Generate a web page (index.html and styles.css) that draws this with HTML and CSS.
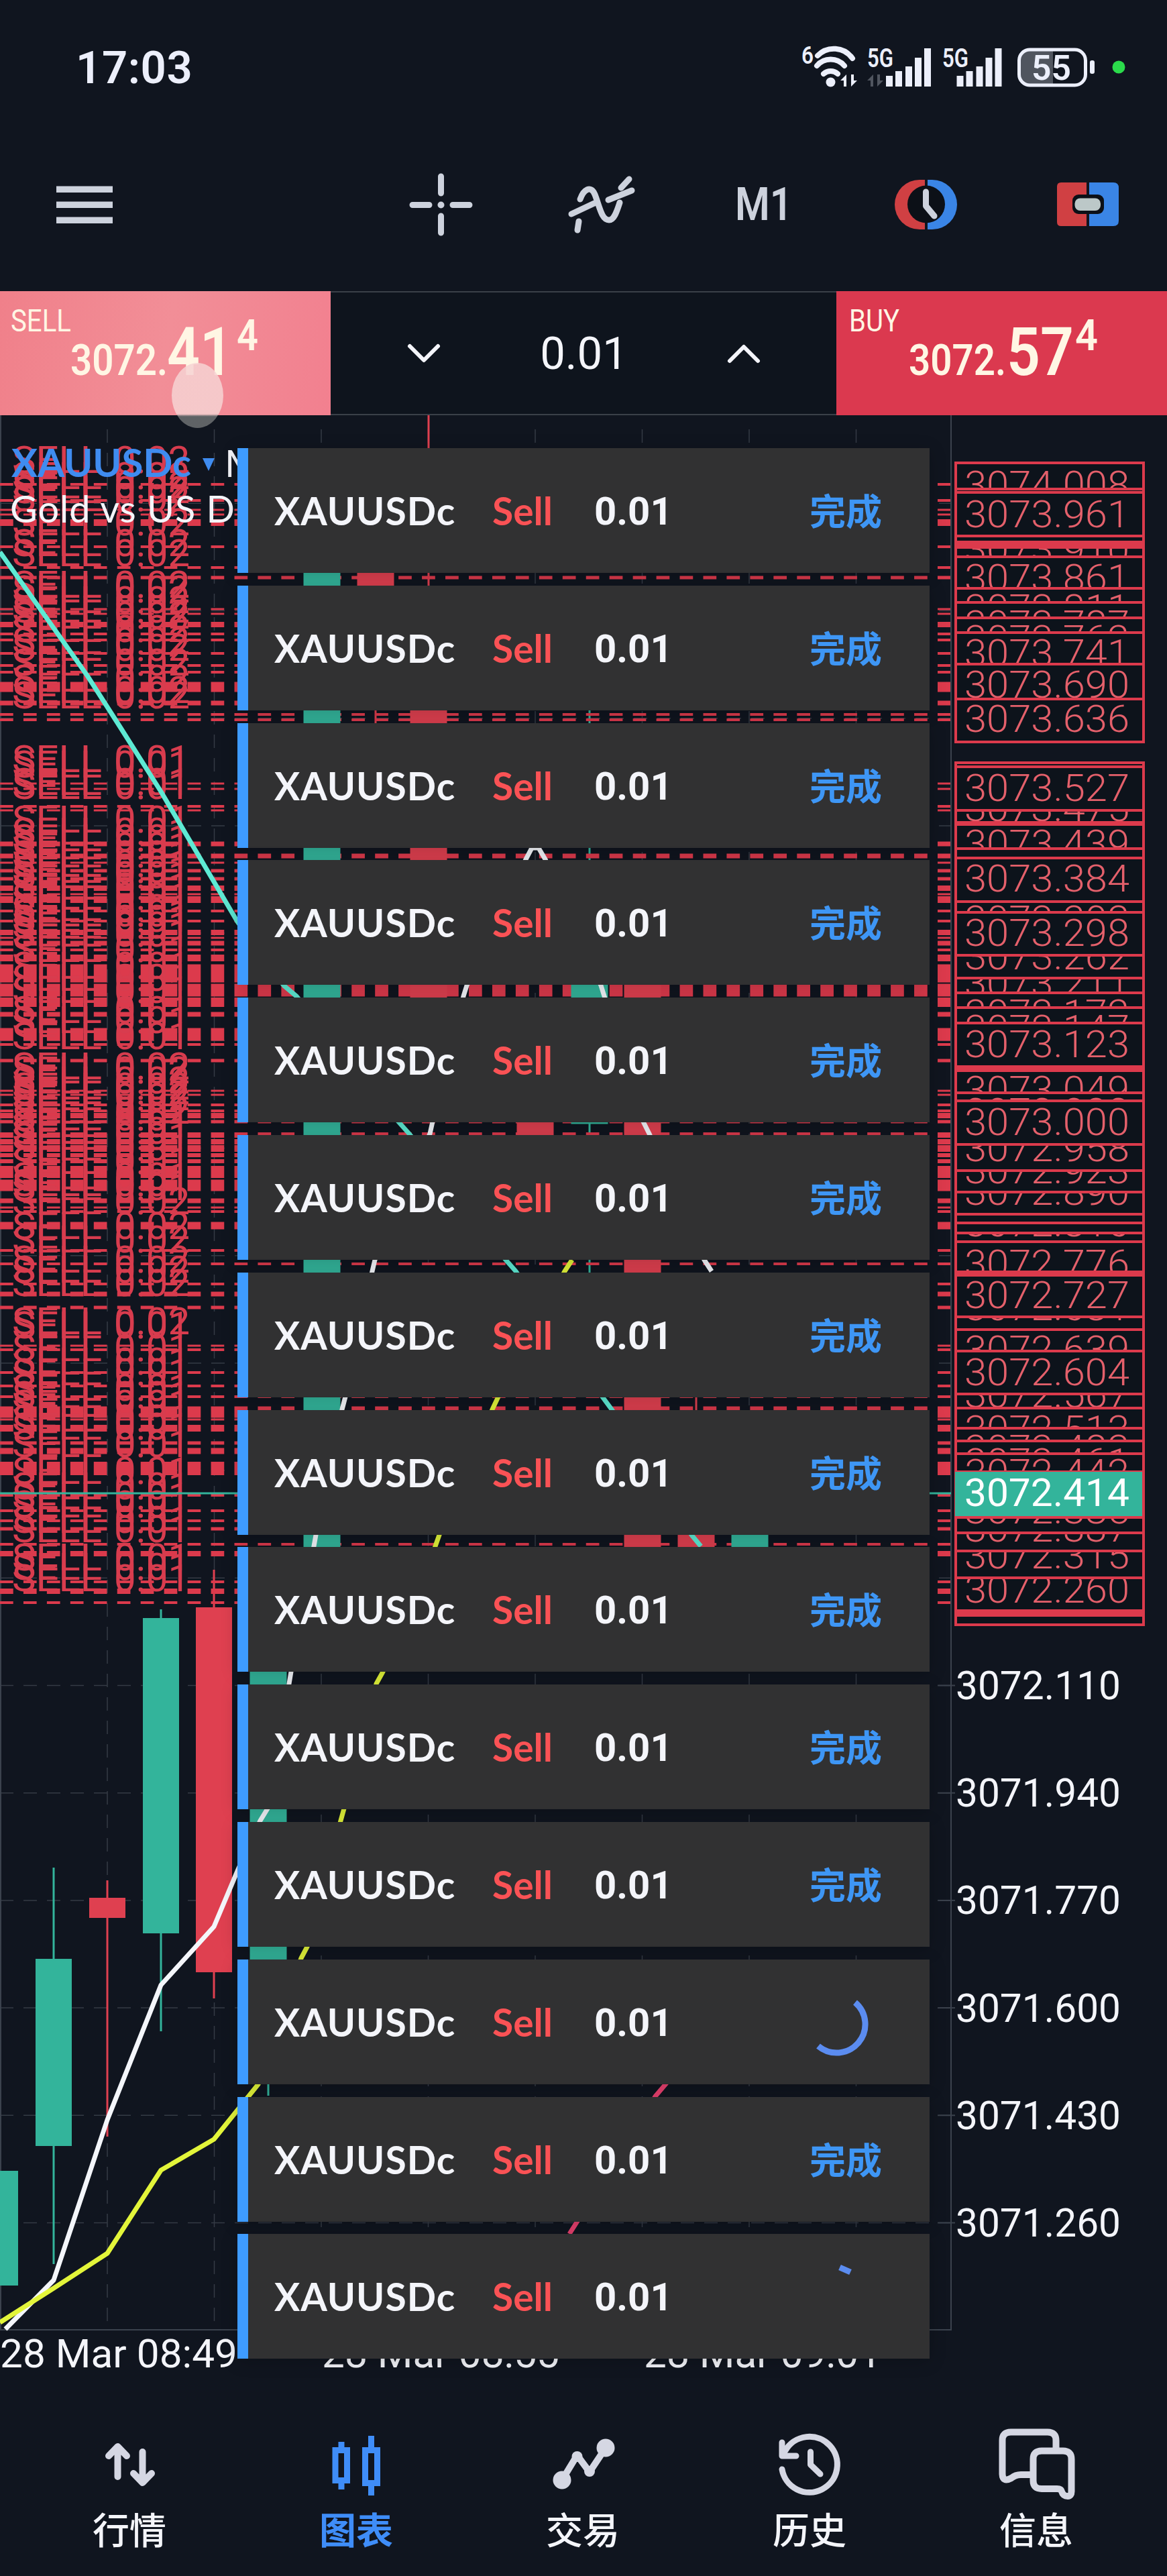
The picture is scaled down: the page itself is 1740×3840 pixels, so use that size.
FILE: index.html
```
<!doctype html>
<html lang="zh">
<head>
<meta charset="utf-8">
<meta name="viewport" content="width=device-width, initial-scale=1">
<title>XAUUSDc M1</title>
<link rel="stylesheet" href="styles.css">
</head>
<body>

	<header id="divStatus">
		<span class="clock">17:03</span>
		<svg class="tray" viewBox="1190 60 500 80">
			<text x="1195" y="95" font-size="36" textLength="18" lengthAdjust="spacingAndGlyphs">6</text>
			<g class="line" stroke-width="8">
				<path d="M1219 83 A34 34 0 0 1 1271 87" />
				<path d="M1218 98 A27 27 0 0 1 1259 98" />
				<path d="M1228 110 A16 16 0 0 1 1249 110" />
			</g>
			<circle cx="1238.500" cy="122.500" r="7" />
			<path id="arrows" d="M1253 120 L1262 111 V129 H1258 V120 Z M1278 120 L1269 129 V111 H1273 V120 Z" />
			<text x="1293" y="100" font-size="39" textLength="39" lengthAdjust="spacingAndGlyphs">5G</text>
			<path class="dim" d="M1293 120 L1302 111 V129 H1298 V120 Z M1317 120 L1308 129 V111 H1312 V120 Z" />
			<path id="bars" d="M1321 113h10v16h-10z M1335 106h10v23h-10z M1350 99h10v30h-10z M1364 86h10v43h-10z M1378 72h10v57h-10z" />
			<text x="1405" y="100" font-size="39" textLength="39" lengthAdjust="spacingAndGlyphs">5G</text>
			<use href="#bars" x="105.500" />
			<path class="dim" d="M1570 74 H1536 Q1520 74 1520 90 V111 Q1520 127 1536 127 H1570 Z" />
			<rect class="line" x="1519.500" y="74" width="99" height="53" rx="16" stroke-width="5" />
			<text x="1538" y="119" font-size="52" textLength="59" lengthAdjust="spacingAndGlyphs">55</text>
			<rect x="1625" y="90" width="7" height="20" rx="3" />
			<circle class="live" cx="1668" cy="100" r="9.500" />
		</svg>
	</header>

	<div id="divToolbar">
		<svg class="menu" viewBox="84 276 84 56"><path d="M84 276.500h84v9.500h-84z M84 299.500h84v9.500h-84z M84 322.500h84v9.500h-84z" /></svg>
		<svg class="cross" viewBox="611 258 93 92">
			<path class="line" stroke-width="9" d="M615 304.500H640 M675 304.500H700 M657.500 262V287 M657.500 321V346" />
			<circle cx="657.500" cy="304.500" r="5" />
		</svg>
		<svg class="wave" viewBox="846 260 100 90">
			<path class="line" stroke-width="9" d="M852 319 L886 303 M861 343 L863 330 M865 297 C870 283 881 275 887 290 C894 308 897 328 908 328 C916 328 920 314 924 302 M907 298 L942 284 M926 280 L938 267" />
		</svg>
		<span class="period">M1</span>
		<svg class="timer" viewBox="1334 267 93 76">
			<path class="red" d="M1379 268 H1371 A37 37 0 0 0 1371 342 H1379 Z" />
			<path class="blue" d="M1383 268 H1390 A37 37 0 0 1 1390 342 H1383 Z" />
			<circle class="hole" cx="1381" cy="304.500" r="28" />
			<path class="line" stroke-width="9" stroke-linecap="butt" d="M1380.500 286 V307 L1393 322" />
		</svg>
		<svg class="toggle" viewBox="1576 272 92 65">
			<path class="red" d="M1620 272 H1582 Q1576 272 1576 278 V331 Q1576 337 1582 337 H1620 Z" />
			<path class="blue" d="M1624 272 H1660 Q1668 272 1668 280 V329 Q1668 337 1660 337 H1624 Z" />
			<rect class="hole" x="1599" y="290" width="47" height="29" rx="9" />
			<rect class="pill" x="1602.500" y="295.500" width="38.500" height="18.500" rx="8" />
		</svg>
	</div>

	<div id="divTrade">
		<svg class="sell" viewBox="0 434 493 185">
			<text x="16" y="494" font-size="47" textLength="90" lengthAdjust="spacingAndGlyphs">SELL</text>
			<g class="quote">
				<text x="105" y="559" font-size="65" textLength="145" lengthAdjust="spacingAndGlyphs">3072.</text>
				<text x="249" y="559" font-size="101" textLength="98" lengthAdjust="spacingAndGlyphs">41</text>
				<text x="353" y="522" font-size="65" textLength="32" lengthAdjust="spacingAndGlyphs">4</text>
			</g>
		</svg>
		<div class="volume">
			<svg width="46" height="26" viewBox="0 0 46 26"><path class="line" stroke-width="6" d="M2 2 L23 23 L44 2" /></svg>
			<span>0.01</span>
			<svg width="46" height="26" viewBox="0 0 46 26"><path class="line" stroke-width="6" d="M2 24 L23 3 L44 24" /></svg>
		</div>
		<svg class="buy" viewBox="1247 434 493 185">
			<text x="1266" y="494" font-size="47" textLength="75" lengthAdjust="spacingAndGlyphs">BUY</text>
			<g class="quote">
				<text x="1355" y="559" font-size="65" textLength="145" lengthAdjust="spacingAndGlyphs">3072.</text>
				<text x="1501" y="559" font-size="101" textLength="100" lengthAdjust="spacingAndGlyphs">57</text>
				<text x="1603" y="522" font-size="65" textLength="34" lengthAdjust="spacingAndGlyphs">4</text>
			</g>
		</svg>
		<i class="touch"></i>
	</div>

	<main id="divChart">
		<svg id="svgChart" viewBox="0 619 1740 2941"></svg>
		<div id="divOrders"></div>
	</main>

	<nav id="divNav">
		<a>
			<svg viewBox="133 3618 120 112"><path class="line" stroke-width="10" d="M175.500 3692 V3650 M162 3661 L175.500 3647 L189 3661 M212.500 3655 V3698 M199 3687 L212.500 3701 L226 3687" /></svg>
			行情
		</a>
		<a class="active">
			<svg viewBox="472 3618 120 112"><path class="line square" stroke-width="9" d="M501 3652.500H518.500V3697.500H501Z M510 3640V3652 M510 3698V3711 M545.500 3652.500H563.500V3701.500H545.500Z M554.500 3631V3652 M554.500 3702V3720" /></svg>
			图表
		</a>
		<a>
			<svg viewBox="809 3618 120 112">
				<path class="line" stroke-width="10" d="M838 3697 L860.500 3660 L879 3685 L903 3649" />
				<circle cx="838" cy="3697" r="13.500" /><circle cx="903" cy="3649" r="13.500" />
				<circle cx="860.500" cy="3662" r="8" /><circle cx="879" cy="3684" r="8" />
			</svg>
			交易
		</a>
		<a>
			<svg viewBox="1147 3618 120 112"><path class="line" stroke-width="9" d="M1166 3681 A41.500 41.500 0 1 0 1171 3653 M1166 3641 V3661 H1187 M1208.500 3655 V3674 L1223 3688" /></svg>
			历史
		</a>
		<a>
			<svg viewBox="1485 3618 120 112"><path class="line" stroke-width="10" d="M1536 3689 H1522 Q1514 3689 1508 3694 Q1495 3701 1494.500 3688 V3638 Q1494.500 3625.500 1507 3625.500 H1562 Q1574.500 3625.500 1574.500 3638 V3650 M1553 3653.500 H1585 Q1597.500 3653.500 1597.500 3666 V3714 Q1597.500 3721 1592 3721 Q1585 3721 1583 3714 Q1582 3710 1576 3710 H1553 Q1540.500 3710 1540.500 3698 V3666 Q1540.500 3653.500 1553 3653.500 Z" /></svg>
			信息
		</a>
	</nav>

<script src="script.js"></script>
</body>
</html>
```

FILE: styles.css
```
* { box-sizing: border-box; }

body { background: #10151f; color: #f4f5fa; font-family: Roboto, "Noto Sans CJK SC", sans-serif; height: 3840px; margin: 0; width: 1740px; }

svg { display: block; fill: currentColor; overflow: visible; }

.line { fill: none; stroke: currentColor; stroke-linecap: round; stroke-linejoin: round; }
.square { stroke-linecap: butt; stroke-linejoin: miter; }
.dim { fill: #50555f; }
.live { fill: #2bdb4b; }
.red { fill: #d04043; }
.blue { fill: #3a85e6; }
.hole { fill: #0c1017; }
.pill { fill: #bcc8c8; }

#divStatus { align-items: flex-start; color: #eceffb; display: flex; height: 180px; justify-content: space-between; padding: 60px 50px 0 113px; }
.clock { font-size: 67px; font-weight: 600; letter-spacing: .6px; line-height: 83px; }
.tray { font-weight: 600; height: 80px; width: 500px; }

#divToolbar { align-items: center; color: #cdd2dd; display: flex; height: 254px; padding: 0 72px 5px 84px; }
.menu { height: 56px; width: 84px; }
.cross { height: 92px; margin-left: 443px; width: 93px; }
.wave { height: 90px; margin-left: 142px; width: 100px; }
.period { font-size: 68px; font-weight: 600; margin-left: 150px; transform: scaleX( .87 ); transform-origin: left; width: 96px; }
.timer { height: 76px; margin-left: 142px; width: 93px; }
.toggle { height: 65px; margin-left: 149px; width: 92px; }

#divTrade { display: flex; height: 185px; position: relative; z-index: 2; }
.sell { background: linear-gradient( 100deg, #f0808a, #f28e97 50%, #f2808f ); color: #fff6e4; height: 185px; width: 493px; }
.buy { background: #db394f; color: #fff6e4; height: 185px; width: 493px; }
.quote { font-weight: 600; }
.volume { align-items: center; background: #0e141d; border: solid #3a4048; border-width: 2px 0; display: flex; flex: 1; font-size: 67px; justify-content: space-between; padding: 0 115px 0 116px; }
.touch { background: linear-gradient( #f6d3d3 76px, #6d7072 80px ); border-radius: 50%; height: 97px; left: 256px; opacity: .85; position: absolute; top: 107px; width: 77px; }

#divChart { height: 2941px; position: relative; }
#svgChart { height: 2941px; width: 1740px; }
#svgChart svg { overflow: hidden; }

.grid { fill: none; stroke: #343b45; stroke-dasharray: 20 15; stroke-width: 1.5; }
.frame { fill: none; stroke: #3b424d; stroke-width: 2; }
.axis { font-size: 59px; }
.order { stroke: #dc3a4c; stroke-dasharray: 19.7 15.25; }
.orderText { fill: #d83c4e; font-size: 55px; font-weight: 400; }
.tag { fill: #0d131b; stroke: #dc3a4c; stroke-width: 4; }
.tagText { fill: #e4606b; font-size: 55px; font-weight: 300; }
.band { fill: #dc3a4c; }
.now { fill: #33b49b; }
.nowText { fill: #fff; font-size: 57px; }
.up { fill: #33b49b; stroke: #33b49b; }
.down { fill: #df4050; stroke: #df4050; }
.ma { fill: none; stroke-linejoin: round; stroke-width: 7; }
.title { font-family: Lato, sans-serif; font-size: 57px; letter-spacing: 1px; }
.symbol { fill: #3f8cf0; font-weight: 700; letter-spacing: 0; }

/* pending order popups over the chart */
#divOrders { display: flex; flex-direction: column; gap: 18.8px; left: 354px; position: absolute; top: 49px; width: 1032px; }
.card { align-items: center; background: #313132; border-left: 16px solid #3e9bff; box-shadow: 0 4px 24px rgba( 0, 0, 0, .2 ); display: flex; font-family: Lato, "Noto Sans CJK SC", sans-serif; font-size: 57px; font-weight: 700; height: 186px; }
.name { letter-spacing: 1px; padding-left: 39px; width: 364px; }
.side { color: #fa5255; width: 152px; }
.lots { font-family: Roboto, sans-serif; font-size: 58px; font-weight: 700; padding-top: 2px; width: 321px; }
.state { color: #3e96f5; font-size: 54px; padding-bottom: 3px; }
.spin { color: #5b8cf0; height: 100px; margin-left: -8px; width: 100px; }

#divNav { display: flex; height: 280px; padding: 58px 26px 0 24px; }
#divNav a { align-items: center; display: flex; flex: 1; flex-direction: column; font-size: 55px; font-weight: 500; line-height: 80px; }
#divNav svg { color: #d5d7e3; height: 112px; margin-bottom: 3px; width: 120px; }
#divNav .active, #divNav .active svg { color: #3f8df8; }
#divNav .active { font-weight: 700; }
```

FILE: script.js
```
const CHART = {

	"axis": [ "3072.110", "3071.940", "3071.770", "3071.600", "3071.430", "3071.260" ],

	// y, thickness
	"orders": [
		[722,4],[746,4],[760,3],[767,3],[779,10],[815,4],[846,4],[861,5],[908,3],[915,3],[931,8],[945,4],[954,4],[974,4],[992,4],[1002,4],
		[1024,15],[1048,7],[1065,4],[1073,4],[1168,3],[1176,3],[1202,4],[1208,3],[1258,7],[1276,7],[1286,3],[1298,5],[1310,5],[1324,8],
		[1333,3],[1341,10],[1358,4],[1373,4],[1390,8],[1398,3],[1406,7],[1416,4],[1428,10],[1451,27],[1476,19],[1494,14],[1512,7],[1542,19],
		[1557,4],[1581,5],[1626,3],[1632,3],[1647,4],[1656,4],[1663,8],[1672,5],[1692,8],[1702,8],[1712,10],[1722,6],[1731,6],[1747,18],
		[1767,17],[1790,7],[1800,3],[1806,4],[1827,11],[1864,4],[1884,4],[1914,4],[1929,7],[1949,5],[2006,3],[2012,4],[2046,4],[2066,4],
		[2082,4],[2105,17],[2116,3],[2129,10],[2151,5],[2163,9],[2189,20],[2229,4],[2252,4],[2267,4],[2279,5],[2302,4],[2316,8],[2358,4],
		[2372,8],[2389,4]
	],

	// top, bottom, price, text middle
	"tags": [
		[690,729,"3074.008",722],[729,734,"",0],[734,799,"3073.961",766],[799,816,"",0],[816,830,"3073.910",818],[830,877,"3073.861",861],
		[877,898,"3073.811",906],[898,921,"3073.787",930],[921,943,"3073.762",952],[943,990,"3073.741",973],[990,1042,"3073.690",1020],
		[1042,1106,"3073.636",1071],[1137,1143,"",0],[1143,1208,"3073.527",1174],[1208,1226,"3073.475",1204],[1226,1265,"3073.439",1257],
		[1265,1279,"",0],[1279,1344,"3073.384",1309],[1344,1360,"3073.303",1370],[1360,1424,"3073.298",1390],[1424,1458,"3073.262",1425],
		[1458,1480,"3073.211",1465],[1480,1502,"3073.172",1510],[1502,1525,"3073.147",1533],[1525,1590,"3073.123",1556],[1590,1596,"",0],
		[1596,1629,"3073.049",1624],[1629,1641,"3073.023",1657],[1641,1706,"3073.000",1672],[1706,1745,"3072.958",1711],
		[1745,1777,"3072.923",1744],[1777,1810,"3072.890",1776],[1810,1823,"",0],[1823,1838,"",0],[1838,1851,"3072.816",1823],
		[1851,1896,"3072.776",1883],[1896,1901,"",0],[1901,1963,"3072.727",1930],[1963,1982,"3072.681",1948],[1982,2014,"3072.639",2011],
		[2014,2078,"3072.604",2045],[2078,2099,"3072.567",2078],[2099,2129,"3072.513",2130],[2129,2148,"3072.483",2159],
		[2148,2167,"3072.461",2179],[2167,2194,"3072.442",2195],[2194,2262,"",0],[2262,2285,"3072.385",2251],[2285,2312,"3072.337",2278],
		[2312,2352,"3072.315",2318],[2352,2401,"3072.260",2369],[2401,2408,"",0],[2408,2422,"",0]
	],

	"bands": [[806,10],[1225,6],[1590,7],[1896,6],[2402,7]],

	// class, x, body top, body bottom, wick top, wick bottom
	"candles": [
		["up",0,3236,3407,3236,3407],["up",80,2920,3199,2784,3375],["down",160,2829,2859,2803,3185],["up",240,2412,2882,2399,3028],
		["down",319,2396,2940,2340,2979],["up",400,2420,2940,2400,3124],["up",480,840,2400,820,2440],["down",560,820,900,800,1160],
		["down",639,1000,1490,619,1500],["down",798,1600,1750,1600,1750],["up",879,1400,1675,1050,1900],["down",958,1440,2400,1440,2440],
		["down",1038,2200,2400,2060,2430],["up",1118,2200,2400,2200,2430]
	],

	"lines": [
		["#5eead4","0,823 130,1007 178,1082 240,1180 354,1374 423,1469 442,1485 594,1672 610,1690 754,1878 769,1895 898,2082 912,2101 1031,2288 1045,2305"],
		["#f4f6fb","8,3472 80,3399 160,3160 240,2959 319,2872 354,2789 388,2714 399,2696 431,2510 434,2492 468,2305 471,2288 510,2101 515,2082 555,1895 559,1878 641,1690 645,1672 691,1485 696,1469 784,1281 793,1264 803,1264 813,1281 896,1469 901,1485 959,1672 968,1690 1050,1878 1061,1895"],
		["#e3f53a","0,3462 80,3411 160,3359 240,3235 319,3189 385,3107 449,2919 458,2902 508,2714 513,2696 561,2510 571,2492 649,2305 655,2288 734,2101 743,2082 842,1895 853,1878"],
		["#e8416f","849,3330 861,3311 977,3125 994,3105"]
	],

	"cards": [ "done", "done", "done", "done", "done", "done", "done", "done", "done", "done", "done", "arc", "done", "dot" ]

};


CHART.text = ( cls, x, y, width, str ) =>
	`<text class="${ cls }" x="${ x }" y="${ y }" textLength="${ width }" lengthAdjust="spacingAndGlyphs">${ str }</text>`;


CHART.draw = function() {

	let out = "";

	// grid
	for ( let i = -11; i < 6; i++ ) out += `<path class="grid" d="M0 ${ 2512.5 + i * 160.2 } H1417" />`;
	for ( let i = 0; i < 8; i++ ) out += `<path class="grid" d="M${ 160 + i * 159.5 } 640 V3473" />`;
	out += `<path class="frame" d="M1 619 V3473 M0 3473 H1418 V619" />`;

	CHART.candles.forEach( ( [ cls, x, top, bottom, high, low ] ) => {
		out += `<g class="${ cls }"><path stroke-width="3" d="M${ x } ${ high } V${ low }" />
			<rect stroke="none" x="${ x - 27 }" y="${ top }" width="54" height="${ bottom - top }" /></g>`;
	} );

	CHART.orders.forEach( ( [ y, size ] ) => {
		out += `<path class="order" stroke-width="${ size }" d="M0 ${ y } H1417" />`;
		const lots = y < 1100 || ( y > 1600 && y < 1700 ) || ( y > 1820 && y < 2010 ) ? "0.02" : "0.01";
		out += CHART.text( "orderText", 18, y - 17, 134, "SELL" );
		out += CHART.text( "orderText", 170, y - 17, 113, lots );
	} );

	// candle bodies stay visible over the dashes
	CHART.candles.slice( 5 ).forEach( ( [ cls, x, top, bottom ] ) => {
		out += `<rect class="${ cls }" stroke="none" x="${ x - 27 }" y="${ top }" width="54" height="${ bottom - top }" />`;
	} );

	CHART.lines.forEach( ( [ color, points ] ) => {
		out += `<polyline class="ma" stroke="${ color }" points="${ points }" />`;
	} );

	out += `<path stroke="#33b49b" stroke-width="3" d="M0 2226 H1418" />`;

	CHART.tags.forEach( ( [ top, bottom, price, mid ] ) => {
		out += `<rect class="tag" x="1425" y="${ top }" width="280" height="${ bottom - top }" />`;
		if ( price ) out += `<svg x="1427" y="${ top + 2 }" width="276" height="${ bottom - top - 4 }">
			${ CHART.text( "tagText", 11, mid + 20 - top - 2, 246, price ) }</svg>`;
	} );

	CHART.bands.forEach( ( [ y, h ] ) => { out += `<rect class="band" x="1425" y="${ y }" width="280" height="${ h }" />`; } );

	out += `<rect class="now" x="1424" y="2194" width="279" height="66" />` + CHART.text( "nowText", 1438, 2245, 246, "3072.414" );

	CHART.axis.forEach( ( price, i ) => {
		out += `<path class="frame" d="M1398 ${ 2512.5 + i * 160.2 } h26" />`;
		out += CHART.text( "axis", 1425, 2533 + i * 160.2, 246, price );
	} );

	[ "28 Mar 08:49", "28 Mar 08:55", "28 Mar 09:01" ].forEach( ( date, i ) => {
		out += CHART.text( "axis", i * 480, 3529, 354, date );
	} );

	out += CHART.text( "title symbol", 17, 711, 268, "XAUUSDc" );
	out += `<path fill="#3f8cf0" d="M302 683 H320 L311 702 Z" />`;
	out += `<text class="title" x="335" y="711">M1</text>`;
	out += CHART.text( "title", 15, 779, 336, "Gold vs US D" );

	svgChart.innerHTML = out;

};


CHART.drawCards = function() {

	const states = {
		"done": `<span class="state">完成</span>`,
		"arc": `<svg class="spin" viewBox="1203 2965 100 100"><path class="line square" stroke-width="9" d="M1279 2986 A39 39 0 0 1 1224 3051" /></svg>`,
		"dot": `<svg class="spin" viewBox="1203 3375 100 100"><path class="line square" stroke-width="9" d="M1256 3382 L1272 3389" /></svg>`
	};

	divOrders.innerHTML = CHART.cards.map( state => `<div class="card">
		<span class="name">XAUUSDc</span><span class="side">Sell</span><span class="lots">0.01</span>${ states[ state ] }
	</div>` ).join( "" );

};


CHART.draw();
CHART.drawCards();
```
